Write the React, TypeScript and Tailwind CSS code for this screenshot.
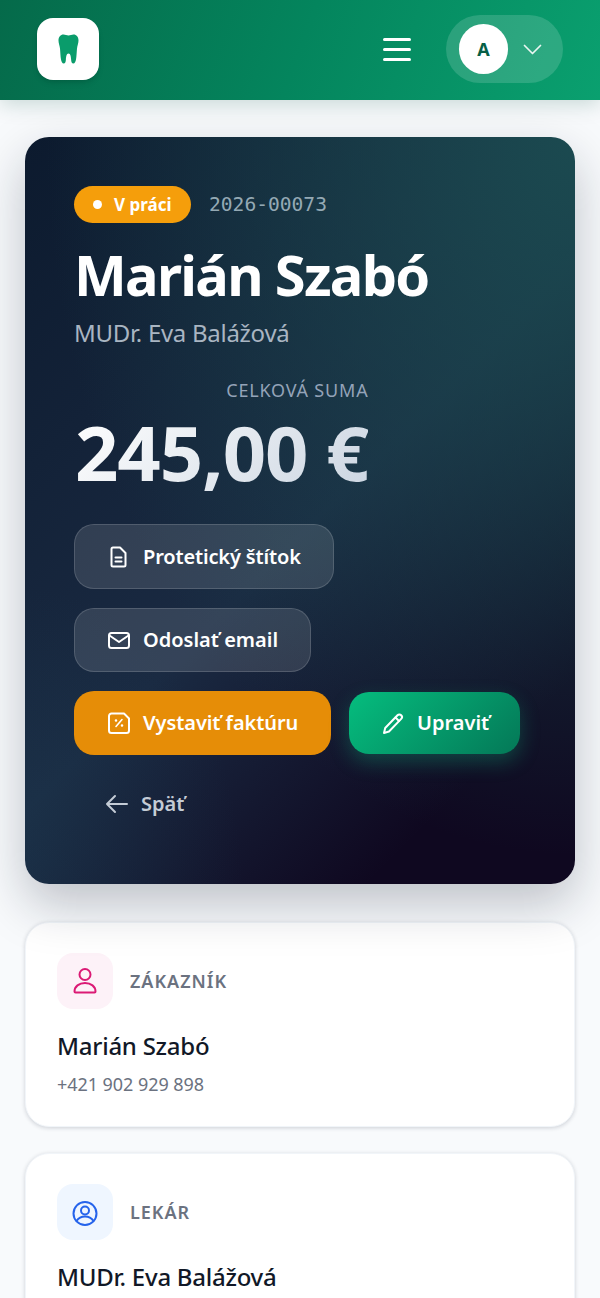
function ToothIcon() {
  return (
    <svg width="21" height="30" viewBox="0 0 21 30" fill="#0a9c6b">
      <path d="M5.500.5C7.500.5 8.500 1.500 10.500 1.500S13.500.5 15.500.5C18.500.5 20.500 3 20.500 6.500c0 3-1.200 5-1.500 8-.3 3-.4 8-1 11-.4 2-1.200 4-2.700 4-1.500 0-2-1.500-2.200-4-.2-2.500-.5-6-2.600-6s-2.400 3.500-2.600 6c-.2 2.500-.7 4-2.200 4-1.500 0-2.300-2-2.700-4-.6-3-.7-8-1-11C1.700 11.500.5 9.500.5 6.500.5 3 2.500.5 5.500.5z" />
    </svg>
  );
}

function Icon({ size = 24, children }: { size?: number; children: React.ReactNode }) {
  return (
    <svg className="shrink-0" width={size} height={size} viewBox={`0 0 ${size} ${size}`} fill="none" stroke="currentColor" strokeWidth="2" strokeLinecap="round" strokeLinejoin="round">
      {children}
    </svg>
  );
}

function InfoCard({ label, name, phone, icon, iconBg }: { label: string; name: string; phone?: string; icon: React.ReactNode; iconBg: string }) {
  return (
    <section className="rounded-[24px] border border-[#f1f5f9] bg-white px-[31px] pt-[30px] pb-[26px] shadow-[0_1px_4px_rgba(15,23,42,0.18)]">
      <div className="flex items-center gap-[17px]">
        <div className={`flex h-[56px] w-[56px] items-center justify-center rounded-[16px] ${iconBg}`}>{icon}</div>
        <span className="text-[18px] font-semibold tracking-[1px] text-[#6b7280]">{label}</span>
      </div>
      <p className="mt-[17px] text-[24px] leading-[40px] font-medium tracking-[-0.25px] text-[#111827]">{name}</p>
      {phone && <p className="mt-[2px] text-[18px] leading-[32px] tracking-[-0.05px] text-[#6b7280]">{phone}</p>}
    </section>
  );
}

export default function App() {
  return (
    <div className="h-[1298px] overflow-hidden bg-[#f8fafc] font-['Noto_Sans',sans-serif]">
      {/* Header */}
      <header className="relative z-10 flex h-[100px] items-center justify-between bg-[linear-gradient(110deg,#056a4a_0%,#04855d_50%,#0aa06f_100%)] px-[37px] pb-[2px] shadow-[0_4px_20px_rgba(6,78,59,0.2)]">
        <div className="flex h-[62px] w-[62px] items-center justify-center rounded-[16px] bg-white shadow-md">
          <ToothIcon />
        </div>
        <div className="flex items-center gap-[35px]">
          <div className="flex w-[28px] flex-col gap-[7px]">
            <span className="h-[3px] rounded-full bg-white" />
            <span className="h-[3px] rounded-full bg-white" />
            <span className="h-[3px] rounded-full bg-white" />
          </div>
          <div className="flex h-[68px] w-[117px] items-center rounded-full bg-white/15 pl-[13px]">
            <div className="flex h-[50px] w-[49px] items-center justify-center rounded-full bg-white text-[18px] font-bold text-[#065f46]">A</div>
            <svg className="ml-[15px] text-white/90" width="19" height="11" viewBox="0 0 19 11" fill="none" stroke="currentColor" strokeWidth="1.700" strokeLinecap="round" strokeLinejoin="round">
              <path d="M1.500 1.500 9.500 9.500 17.500 1.500" />
            </svg>
          </div>
        </div>
      </header>

      <main className="flex flex-col px-[25px] pt-[37px]">
        {/* Hero */}
        <section className="relative h-[747px] rounded-[24px] bg-[radial-gradient(ellipse_at_0%_100%,rgba(30,70,90,0.3)_0%,transparent_28%),radial-gradient(ellipse_at_100%_0%,#1b4a50_0%,transparent_68%),linear-gradient(135deg,#0c1a2e_0%,#1a2a42_52%,#0f0820_84%)] px-[49px] pt-[49px] shadow-[0_20px_50px_rgba(15,23,42,0.25)]">
          <div className="flex items-center gap-[18px]">
            <span className="flex h-[37px] w-[117px] items-center rounded-full bg-[#f59e0b] pl-[19px] text-[17px] font-bold text-white">
              <span className="mr-[12px] h-[9px] w-[9px] rounded-full bg-white" />
              V práci
            </span>
            <span className="font-['DejaVu_Sans_Mono',monospace] text-[19.600px] text-[#94a9b4]">2026-00073</span>
          </div>
          <h1 className="mt-[15px] text-[56px] leading-[72px] font-bold tracking-[-1.700px] text-white">Marián Szabó</h1>
          <p className="mt-[5px] text-[24px] leading-[36px] tracking-[-0.280px] text-[#a9b5c2]">MUDr. Eva Balážová</p>
          <div className="mt-[25px] w-fit text-right">
            <p className="text-[18px] leading-[28px] tracking-[0.800px] text-[#94a3b8]">CELKOVÁ SUMA</p>
            <p className="bg-[linear-gradient(135deg,#ffffff,#cbd5e1)] bg-clip-text pl-[1px] text-[76px] leading-[96px] font-bold tracking-[-1.100px] text-transparent">245,00 €</p>
          </div>

          <div className="mt-[24px] flex w-fit items-center gap-[12px] rounded-[20px] border border-white/15 bg-white/12 px-[32px] py-[16px] text-[20px] leading-[31px] font-semibold tracking-[-0.150px] text-white">
            <Icon>
              <path d="M6 2.500h7l5.500 5.500v12a1.500 1.500 0 0 1-1.500 1.500H6A1.500 1.500 0 0 1 4.500 20V4A1.500 1.500 0 0 1 6 2.500z" />
              <path d="M8.500 12.500h6M8.500 16.500h6" />
            </Icon>
            Protetický štítok
          </div>
          <div className="mt-[19px] flex w-fit items-center gap-[12px] rounded-[20px] border border-white/15 bg-white/12 px-[32px] py-[16px] text-[20px] leading-[30px] font-semibold text-white">
            <Icon>
              <rect x="2" y="5" width="20" height="15" rx="2.500" />
              <path d="M2.500 7.500 12 14l9.500-6.500" />
            </Icon>
            Odoslať email
          </div>
          <div className="mt-[19px] flex items-center gap-[18px]">
            <div className="flex h-[64px] w-[257px] items-center gap-[12px] rounded-[20px] bg-[#e68d07] pl-[33px] text-[20px] font-semibold tracking-[-0.070px] text-white">
              <Icon>
                <path d="M4.500 2.500H17l5 5V19.500a2.500 2.500 0 0 1-2.500 2.500h-15A2.500 2.500 0 0 1 2 19.500V5a2.500 2.500 0 0 1 2.500-2.500z" />
                <path d="M9 15.500l6-7" strokeWidth="1.600" />
                <circle cx="9" cy="9.500" r=".6" strokeWidth="1.400" />
                <circle cx="15" cy="14.500" r=".6" strokeWidth="1.400" />
              </Icon>
              Vystaviť faktúru
            </div>
            <div className="flex h-[62px] w-[171px] items-center gap-[12px] rounded-[20px] bg-[linear-gradient(135deg,#05bd7e,#047857)] pl-[32px] text-[20px] font-semibold text-white shadow-[0_8px_20px_rgba(16,185,129,0.3)]">
              <Icon>
                <path d="M3 22l1.200-5L16.500 4.200a2.600 2.600 0 0 1 3.700 3.700L8 20.500z" />
                <path d="M14.500 6.500l3.500 3.500" />
              </Icon>
              Upraviť
            </div>
          </div>
          <div className="mt-[31px] flex items-center gap-[12px] pl-[31px] text-[20px] leading-[36px] font-semibold text-[#c4ccd6]">
            <Icon>
              <path d="M2 12h20M10 4l-8 8 8 8" />
            </Icon>
            Späť
          </div>
        </section>

        <div className="mt-[38px] flex flex-col gap-[26px]">
          <InfoCard
            label="ZÁKAZNÍK"
            name="Marián Szabó"
            phone="+421 902 929 898"
            iconBg="bg-[#fdf2f8]"
            icon={
              <span className="text-[#db1a75]">
                <Icon size={28}>
                  <circle cx="14" cy="7.500" r="5.500" />
                  <path d="M4.500 25.500c-.5 0-1-.5-1-1 0-5 4.500-8.500 10.500-8.500s10.500 3.500 10.500 8.500c0 .5-.5 1-1 1z" />
                </Icon>
              </span>
            }
          />
          <InfoCard
            label="LEKÁR"
            name="MUDr. Eva Balážová"
            iconBg="bg-[#eff6ff]"
            icon={
              <span className="text-[#2563eb]">
                <Icon size={28}>
                  <circle cx="14" cy="15.500" r="11.500" />
                  <circle cx="14" cy="12.500" r="4" />
                  <path d="M5.500 23c2-3 5-4.500 8.500-4.500s6.500 1.500 8.500 4.500" />
                </Icon>
              </span>
            }
          />
        </div>
      </main>
    </div>
  );
}
